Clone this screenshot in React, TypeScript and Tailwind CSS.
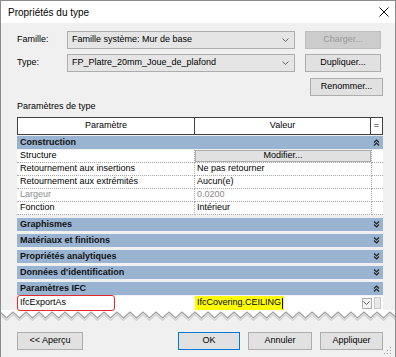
import React from 'react';

const font = { fontFamily: '"Liberation Sans", Arial, sans-serif' };

const Chevron: React.FC<{ up?: boolean }> = ({ up }) => (
  <svg width="7" height="7" viewBox="0 0 7 7" className="shrink-0">
    {up ? (
      <path d="M1 3.5 L3.5 1 L6 3.5 M1 6.5 L3.5 4 L6 6.5" fill="none" stroke="#222" strokeWidth="1.2" />
    ) : (
      <path d="M1 0.5 L3.5 3 L6 0.5 M1 3.5 L3.5 6 L6 3.5" fill="none" stroke="#222" strokeWidth="1.2" />
    )}
  </svg>
);

const SmallDown: React.FC = () => (
  <svg width="7" height="4" viewBox="0 0 7 4">
    <path d="M0.5 0.5 L3.5 3.5 L6.5 0.5" fill="none" stroke="#606060" strokeWidth="1" />
  </svg>
);

const Button: React.FC<{ label: string; w: string; disabled?: boolean; primary?: boolean }> = ({ label, w, disabled, primary }) => (
  <div
    className={`${w} h-[18px] flex items-center justify-center text-[9px] border ${
      disabled
        ? 'bg-[#cccccc] border-[#bfbfbf] text-[#9a9a9a]'
        : primary
        ? 'bg-[#e1e1e1] border-[#0078d7] text-black'
        : 'bg-[#e1e1e1] border-[#adadad] text-black'
    }`}
  >
    {label}
  </div>
);

const Combo: React.FC<{ value: string }> = ({ value }) => (
  <div className="w-[228px] h-[18px] flex items-center justify-between bg-[#e5e5e5] border border-[#adadad] pl-[4px] pr-[5px] text-[9px] text-black">
    <span>{value}</span>
    <SmallDown />
  </div>
);

const Group: React.FC<{ label: string; up?: boolean }> = ({ label, up }) => (
  <div className="h-[13px] bg-[#99b4d1] flex items-center justify-between pl-[3px] pr-[3px] text-[9px] font-bold text-[#111]">
    <span>{label}</span>
    <Chevron up={up} />
  </div>
);

const Row: React.FC<{ name: string; value?: string; grey?: boolean; button?: boolean }> = ({ name, value, grey, button }) => (
  <div className={`h-[13px] flex bg-white text-[9px] ${grey ? 'text-[#8a8a8a]' : 'text-black'}`}>
    <div className="w-[178px] border-b border-r border-dotted border-[#a8a8a8] pl-[3px] flex items-center">{name}</div>
    <div className="w-[177px] border-b border-r border-dotted border-[#a8a8a8] flex items-center">
      {button ? (
        <div className="w-full h-full bg-[#e1e1e1] border border-[#adadad] flex items-center justify-center">Modifier...</div>
      ) : (
        <span className="pl-[2px]">{value}</span>
      )}
    </div>
    <div className="flex-1 border-b border-dotted border-[#a8a8a8]" />
  </div>
);

const Zigzag: React.FC = () => {
  const pts: string[] = [];
  const pts2: string[] = [];
  for (let x = 0, i = 0; x <= 400; x += 6.5, i++) {
    const y = i % 2 === 0 ? 2 : 8;
    pts.push(`${x},${y}`);
    pts2.push(`${x},${y + 2.5}`);
  }
  return (
    <svg width="396" height="12" viewBox="0 0 396 12" className="block">
      <polygon points={`0,0 ${pts.join(' ')} 400,0`} fill="#ffffff" />
      <polyline points={pts2.join(' ')} fill="none" stroke="#d0d0d0" strokeWidth="1.2" />
      <polyline points={pts.join(' ')} fill="none" stroke="#9d9d9d" strokeWidth="1.2" />
    </svg>
  );
};

const App: React.FC = () => {
  return (
    <div className="w-[396px] h-[357px] bg-[#f0f0f0] border-x border-t border-[#8c8c8c] relative overflow-hidden" style={font}>
      {/* Barre de titre */}
      <div className="h-[22px] bg-white flex items-center justify-between pl-[7px] pr-[6px]">
        <span className="text-[10px] text-black">Propriétés du type</span>
        <svg width="10" height="10" viewBox="0 0 10 10">
          <path d="M0.5 0.5 L9.5 9.5 M9.5 0.5 L0.5 9.5" stroke="#111" strokeWidth="1" />
        </svg>
      </div>

      <div className="pl-[16px] pr-[12px]">
        {/* Famille / Type */}
        <div className="mt-[8px] flex items-center">
          <span className="w-[50px] text-[9px] text-black">Famille:</span>
          <Combo value="Famille système: Mur de base" />
          <div className="ml-[10px]">
            <Button label="Charger..." w="w-[76px]" disabled />
          </div>
        </div>
        <div className="mt-[5px] flex items-center">
          <span className="w-[50px] text-[9px] text-black">Type:</span>
          <Combo value="FP_Platre_20mm_Joue_de_plafond" />
          <div className="ml-[10px]">
            <Button label="Dupliquer..." w="w-[76px]" />
          </div>
        </div>
        <div className="mt-[6px] flex justify-end">
          <Button label="Renommer..." w="w-[73px]" />
        </div>

        <div className="mt-[5px] h-[12px] text-[9px] text-black flex items-center">Paramètres de type</div>

        {/* Tableau */}
        <div className="mt-[4px] w-[366px]">
          <div className="h-[18px] flex bg-white border border-[#404040] text-[9px] text-black">
            <div className="w-[177px] border-r border-[#404040] flex items-center justify-center">Paramètre</div>
            <div className="w-[176px] border-r border-[#404040] flex items-center justify-center">Valeur</div>
            <div className="flex-1 flex items-center justify-center">=</div>
          </div>
          <div className="mt-[1px]">
            <Group label="Construction" up />
          </div>
          <div className="mt-[1px]">
            <Row name="Structure" button />
            <Row name="Retournement aux insertions" value="Ne pas retourner" />
            <Row name="Retournement aux extrémités" value="Aucun(e)" />
            <Row name="Largeur" value="0.0200" grey />
            <Row name="Fonction" value="Intérieur" />
          </div>
          <div className="mt-[3px] flex flex-col gap-[3px]">
            <Group label="Graphismes" />
            <Group label="Matériaux et finitions" />
            <Group label="Propriétés analytiques" />
            <Group label="Données d'identification" />
            <Group label="Paramètres IFC" up />
          </div>
          <div className="mt-[1px] h-[14px] flex bg-white text-[9px] text-black relative">
            <div className="w-[178px] pl-[3px] flex items-center">IfcExportAs</div>
            <div className="w-[166px] flex items-center">
              <span className="bg-[#ffff00] h-full flex items-center pl-[2px] pr-[1px]">
                IfcCovering.CEILING
                <span className="w-px h-[11px] bg-black ml-[1px]" />
              </span>
            </div>
            <div className="w-[11px] flex items-center justify-center">
              <div className="w-[10px] h-[11px] border border-[#adadad] bg-[#f4f4f4] flex items-center justify-center">
                <SmallDown />
              </div>
            </div>
            <div className="flex-1 flex items-center justify-center">
              <div className="w-[7px] h-[12px] bg-[#e8e8e8] border border-[#c8c8c8]" />
            </div>
            <div className="absolute left-0 top-[-1px] w-[98px] h-[16px] border-[1.5px] border-[#e8262b] rounded-[3px]" />
          </div>
        </div>
      </div>

      <div className="-ml-px">
        <Zigzag />
      </div>

      {/* Boutons */}
      <div className="mt-[10px] pl-[16px] pr-[12px] flex items-center">
        <Button label="<< Aperçu" w="w-[66px]" />
        <div className="flex-1" />
        <Button label="OK" w="w-[62px]" primary />
        <div className="ml-[8px]">
          <Button label="Annuler" w="w-[64px]" />
        </div>
        <div className="ml-[8px]">
          <Button label="Appliquer" w="w-[63px]" />
        </div>
      </div>

      {/* Poignée */}
      <svg width="8" height="8" viewBox="0 0 8 8" className="absolute right-[3px] bottom-[2px]">
        <rect x="6" y="0" width="1" height="1" fill="#a0a0a0" />
        <rect x="3" y="3" width="1" height="1" fill="#a0a0a0" />
        <rect x="6" y="3" width="1" height="1" fill="#a0a0a0" />
        <rect x="0" y="6" width="1" height="1" fill="#a0a0a0" />
        <rect x="3" y="6" width="1" height="1" fill="#a0a0a0" />
        <rect x="6" y="6" width="1" height="1" fill="#a0a0a0" />
      </svg>
    </div>
  );
};

export default App;
